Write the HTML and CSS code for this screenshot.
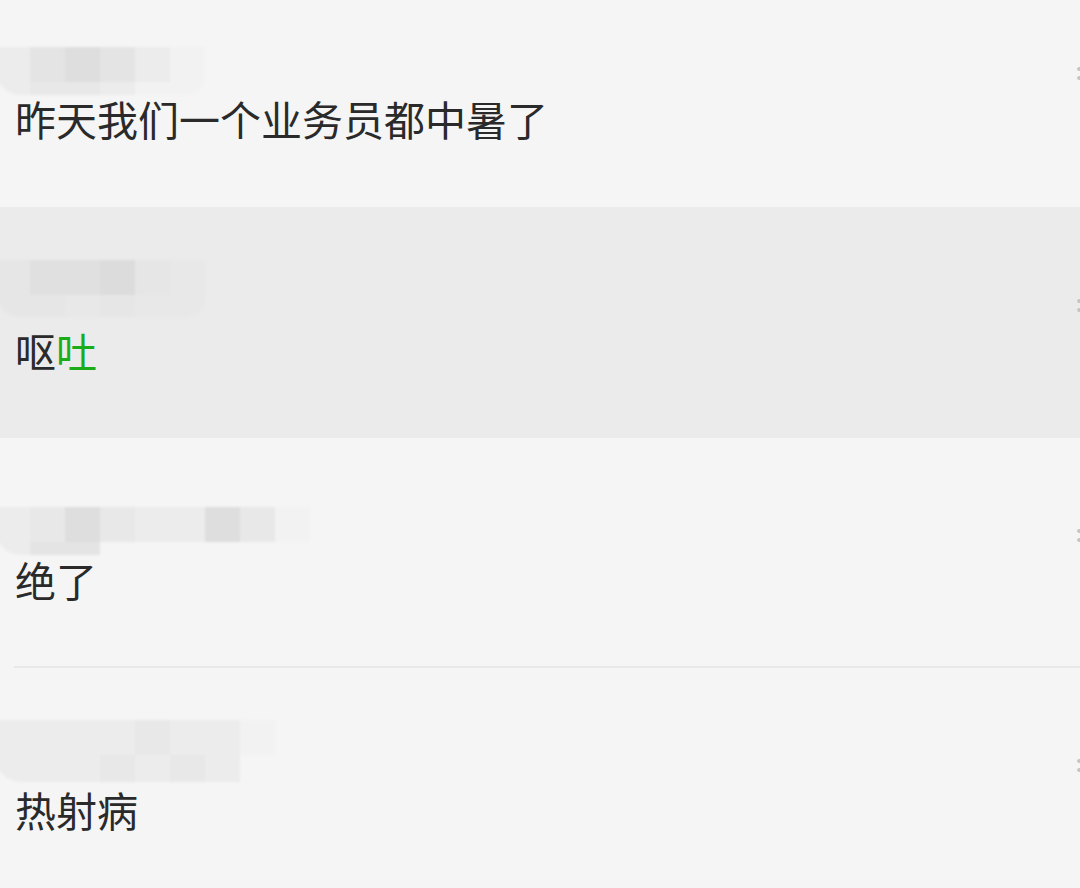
FILE: index.html
```html
<!DOCTYPE html>
<html lang="zh-CN">
<head>
  <meta charset="UTF-8">
  <title>评论</title>
  <meta name="viewport" content="width=device-width, initial-scale=1.0">
  <link rel="stylesheet" href="styles.css">
</head>
<body>
  <div class="list">

    <div class="comment c1">
      <div class="body">
        <div class="name">
          <div class="mosaic cols6">
            <span class="s1"></span><span class="s3"></span><span class="s4"></span><span class="s3"></span><span class="s1"></span><span class="s0"></span>
            <span class="s1 short"></span><span class="s2 short"></span><span class="s2 short"></span><span class="s1 short"></span><span class="s0 short"></span><span class="s0 short"></span>
          </div>
        </div>
        <p class="text">昨天我们一个业务员都中暑了</p>
      </div>
      <div class="more"><i></i><i></i></div>
    </div>

    <div class="comment c2 active">
      <div class="body">
        <div class="name">
          <div class="mosaic cols6">
            <span class="s1"></span><span class="s3"></span><span class="s3"></span><span class="s4"></span><span class="s1"></span><span class="s0"></span>
            <span class="s1 mid"></span><span class="s1 mid"></span><span class="s2 mid"></span><span class="s1 mid"></span><span class="s0 mid"></span><span class="s0 mid"></span>
          </div>
        </div>
        <p class="text">呕<span class="hl">吐</span></p>
      </div>
      <div class="more"><i></i><i></i></div>
    </div>

    <div class="comment c3 sep">
      <div class="body">
        <div class="name">
          <div class="mosaic cols9">
            <span class="s1"></span><span class="s2"></span><span class="s4"></span><span class="s2"></span><span class="s1"></span><span class="s1"></span><span class="s4"></span><span class="s2"></span><span class="s0"></span>
            <span class="s1 short round"></span><span class="s3 short"></span><span class="s3 short"></span><span class="bg short"></span><span class="bg short"></span><span class="bg short"></span><span class="bg short"></span><span class="bg short"></span><span class="bg short"></span>
          </div>
        </div>
        <p class="text">绝了</p>
      </div>
      <div class="more"><i></i><i></i></div>
    </div>

    <div class="comment c4">
      <div class="body">
        <div class="name">
          <div class="mosaic cols8">
            <span class="s1"></span><span class="s1"></span><span class="s1"></span><span class="s1"></span><span class="s2"></span><span class="s1"></span><span class="s1"></span><span class="s0"></span>
            <span class="s1 tall"></span><span class="s1 tall"></span><span class="s1 tall"></span><span class="s2 tall"></span><span class="s1 tall"></span><span class="s2 tall"></span><span class="s1 tall"></span><span class="bg tall"></span>
          </div>
        </div>
        <p class="text">热射病</p>
      </div>
      <div class="more"><i></i><i></i></div>
    </div>

  </div>
</body>
</html>
```

FILE: styles.css
```css
html, body {
  margin: 0;
  height: 100%;
  overflow: hidden;
}
body {
  background: #f5f5f5;
  font-family: "Noto Sans CJK SC", "Noto Sans", sans-serif;
  color: #2a2a2a;
}
.list {
  display: flex;
  flex-direction: column;
}
.comment {
  display: flex;
  justify-content: space-between;
  box-sizing: border-box;
}
.body {
  flex: 1;
  padding-left: 15px;
}
.c1 { height: 207px; padding-top: 47px; }
.c2 { height: 231px; padding-top: 53px; }
.c3 { height: 230px; padding-top: 69px; }
.c4 { height: 220px; padding-top: 52px; }

.active {
  background: #ebebeb;
}
.sep {
  position: relative;
}
.sep::after {
  content: "";
  position: absolute;
  left: 14px;
  right: 0;
  bottom: 0;
  height: 2px;
  background: #e8e8e8;
}

/* blurred nickname */
.name {
  margin-left: -20px;
}
.mosaic {
  display: grid;
  border-radius: 0 0 18px 26px;
  overflow: hidden;
  filter: blur(1px);
}
.cols6 { grid-template-columns: repeat(6, 35px); width: 210px; }
.cols8 { grid-template-columns: repeat(8, 35px); width: 280px; }
.cols9 { grid-template-columns: repeat(9, 35px); width: 315px; }
.mosaic span { height: 35px; }
.mosaic span.short { height: 13px; }
.mosaic span.mid { height: 22px; }
.mosaic span.tall { height: 27px; }
.mosaic .round { border-radius: 0 0 0 20px; }
.s0 { background: #f2f2f2; }
.s1 { background: #ececec; }
.s2 { background: #e8e8e8; }
.s3 { background: #e4e4e4; }
.s4 { background: #dedede; }
.bg { background: transparent; }
.active .s0 { background: #e8e8e8; }
.active .s1 { background: #e6e6e6; }
.active .s3 { background: #e0e0e0; }
.active .s4 { background: #dcdcdc; }

.text {
  margin: 0;
  font-size: 41px;
  line-height: 48px;
}
.c1 .text { margin-top: -1px; }
.c2 .text { margin-top: 9px; }
.c3 .text { margin-top: 0; }
.c4 .text { margin-top: 3px; }
.hl {
  color: #1aad19;
}

/* more button, cut by the window edge */
.more {
  width: 3px;
  overflow: hidden;
  display: flex;
  flex-direction: column;
  gap: 5px;
}
.more i {
  display: block;
  flex: none;
  width: 5px;
  height: 4px;
  border-radius: 50%;
  background: #c4c4c4;
}
.c1 .more { padding-top: 20px; }
.c2 .more { padding-top: 39px; }
.c3 .more { padding-top: 22px; }
.c4 .more { padding-top: 39px; }
```
